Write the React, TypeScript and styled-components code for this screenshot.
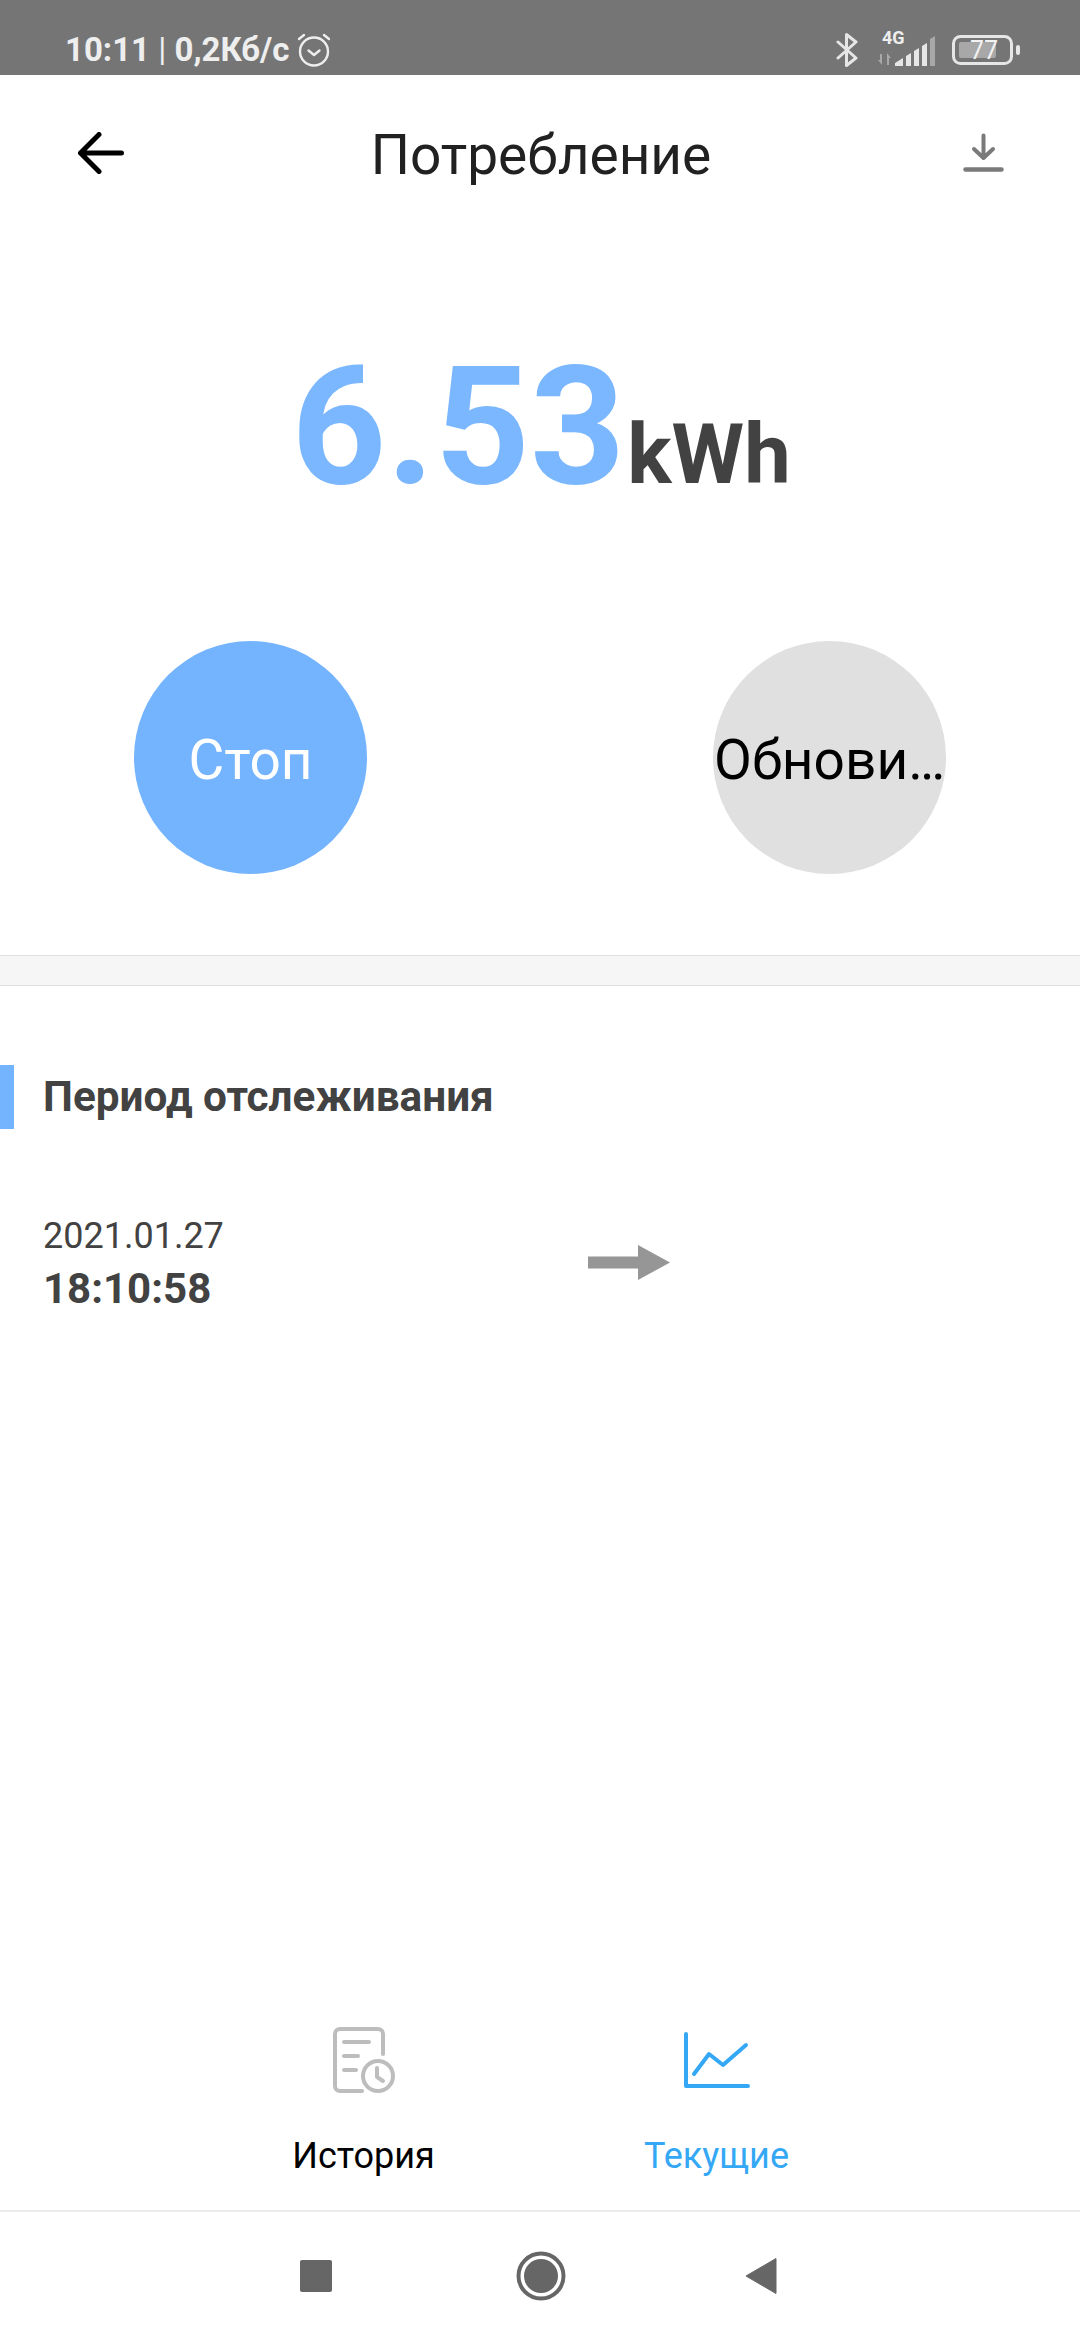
import styled, { createGlobalStyle } from 'styled-components'

const GlobalStyle = createGlobalStyle`
  html, body {
    margin: 0;
    padding: 0;
    background: #ffffff;
    font-family: Roboto, 'Noto Sans', sans-serif;
  }
`

const Page = styled.div`
  width: 1080px;
  height: 2340px;
  display: flex;
  flex-direction: column;
  overflow: hidden;
  background: #ffffff;
`

const StatusBar = styled.div`
  height: 75px;
  flex: none;
  box-sizing: border-box;
  padding: 24px 60px 0 65px;
  display: flex;
  align-items: center;
  justify-content: space-between;
  background: #757575;
  color: #eeeeee;
`

const StatusLeft = styled.div`
  display: flex;
  align-items: center;
  gap: 8px;
  font-size: 33px;
  font-weight: 700;
  line-height: 40px;
  white-space: nowrap;
`

const Thin = styled.span`
  font-weight: 400;
`

const StatusRight = styled.div`
  display: flex;
  align-items: center;
`

const SignalBox = styled.div`
  position: relative;
  width: 60px;
  height: 36px;
  margin-left: 20px;
`

const FourG = styled.span`
  position: absolute;
  left: 4px;
  top: -4px;
  font-size: 18px;
  line-height: 20px;
  font-weight: 700;
`

const BatteryBox = styled.div`
  position: relative;
  width: 68px;
  height: 30px;
  margin-left: 14px;
`

const BatteryText = styled.span`
  position: absolute;
  left: 18px;
  top: 0;
  font-size: 25px;
  line-height: 31px;
  color: #f2f2f2;
`

const Header = styled.div`
  height: 160px;
  flex: none;
  box-sizing: border-box;
  padding: 0 76px 0 78px;
  display: flex;
  align-items: center;
  justify-content: space-between;
`

const IconSlot = styled.div<{ $end?: boolean }>`
  width: 46px;
  height: 46px;
  margin-top: -4px;
  display: flex;
  align-items: center;
  justify-content: ${p => (p.$end ? 'flex-end' : 'flex-start')};
`

const Title = styled.div`
  font-size: 55px;
  line-height: 60px;
  color: #212121;
`

const ValueRow = styled.div`
  margin-top: 112px;
  padding-left: 2px;
  height: 160px;
  display: flex;
  align-items: baseline;
  justify-content: center;
  line-height: 160px;
`

const Value = styled.span`
  font-size: 166px;
  font-weight: 700;
  color: #7ab7ff;
`

const Unit = styled.span`
  font-size: 83px;
  font-weight: 700;
  color: #424242;
  margin-left: 2px;
`

const Buttons = styled.div`
  margin-top: 134px;
  padding: 0 134px;
  display: flex;
  justify-content: space-between;
`

const RoundButton = styled.div<{ $active?: boolean }>`
  width: 233px;
  height: 233px;
  box-sizing: border-box;
  padding-top: 4px;
  border-radius: 50%;
  display: flex;
  align-items: center;
  justify-content: center;
  background: ${p => (p.$active ? '#74b4ff' : '#e0e0e0')};
  color: ${p => (p.$active ? '#ffffff' : '#000000')};
  font-size: 55px;
  white-space: nowrap;
`

const Band = styled.div`
  margin-top: 81px;
  height: 31px;
  box-sizing: border-box;
  flex: none;
  background: #f6f6f6;
  border-top: 1px solid #e0e0e0;
  border-bottom: 1px solid #e0e0e0;
`

const SectionHead = styled.div`
  margin-top: 79px;
  display: flex;
  align-items: center;
  gap: 29px;
`

const Marker = styled.div`
  width: 14px;
  height: 64px;
  background: #74b4ff;
`

const SectionTitle = styled.div`
  margin-top: -2px;
  font-size: 42.3px;
  font-weight: 700;
  color: #424242;
`

const PeriodRow = styled.div`
  margin-top: 81px;
  padding-left: 43px;
  display: flex;
  align-items: center;
`

const PeriodPoint = styled.div`
  width: 545px;
  color: #424242;
`

const PointDate = styled.div`
  font-size: 36px;
  line-height: 53px;
`

const PointTime = styled.div`
  font-size: 42px;
  line-height: 52px;
  font-weight: 700;
`

const Spacer = styled.div`
  flex: 1;
`

const Tabs = styled.div`
  flex: none;
  display: flex;
  justify-content: center;
  padding-bottom: 30px;
`

const Tab = styled.div<{ $active?: boolean }>`
  width: 353px;
  display: flex;
  flex-direction: column;
  align-items: center;
  font-size: 36px;
  line-height: 48px;
  color: ${p => (p.$active ? '#35a8f5' : '#000000')};
`

const TabIcon = styled.div`
  height: 70px;
  margin-bottom: 37px;
  display: flex;
  align-items: center;
`

const NavBar = styled.div`
  height: 130px;
  flex: none;
  box-sizing: border-box;
  border-top: 2px solid #ebebeb;
  display: flex;
  align-items: center;
  justify-content: center;
  gap: 184px;
  padding-right: 3px;
`

const NavBackSlot = styled.div`
  display: flex;
  margin-left: -5px;
`

const BackIcon = () => (
  <svg width="46" height="42" viewBox="0 0 46 42" fill="none" stroke="#000" strokeWidth="5" strokeLinecap="round" strokeLinejoin="round">
    <path d="M2.500 21h41M21 2.500 2.500 21 21 39.500" />
  </svg>
)

const DownloadIcon = () => (
  <svg width="41" height="40" viewBox="0 0 41 40" fill="none" stroke="#7a7a7a" strokeLinecap="round" strokeLinejoin="round">
    <path strokeWidth="4" d="M20.500 2.500v22M11 16l9.500 9 9.500-9" />
    <path strokeWidth="4.500" d="M2.500 36.500h36" />
  </svg>
)

const AlarmIcon = () => (
  <svg width="34" height="34" viewBox="0 0 34 34" fill="none" stroke="#eeeeee" strokeWidth="2.400" strokeLinecap="round" strokeLinejoin="round">
    <circle cx="17" cy="18.500" r="14" />
    <path d="M11.500 17.500 17 22l5.500-4.500M2 6l5-4M32 6l-5-4" />
  </svg>
)

const BluetoothIcon = () => (
  <svg width="22" height="34" viewBox="0 0 22 34" fill="none" stroke="#e6e6e6" strokeWidth="3" strokeLinecap="round" strokeLinejoin="round">
    <path d="M2 9l18 16-9.500 7.500V1.500L20 9 2 25" />
  </svg>
)

const SignalIcon = () => (
  <svg width="60" height="36" viewBox="0 0 60 36" fill="#e6e6e6">
    <path fill="#a8a8a8" d="M4 22v11l-4-5h2v-6zM9 33V21l4 5h-2v7z" />
    <path d="M17 34v-3l8-5v8zM28 34V24l5-3v13zM36 34V19l5-3v18zM44 34V14l5-3v23z" />
    <path fill="#a8a8a8" d="M52 34V7l5-3v30z" />
  </svg>
)

const BatteryIcon = () => (
  <svg width="68" height="30" viewBox="0 0 68 30" fill="none">
    <rect x="1.500" y="1.500" width="58" height="27" rx="7" stroke="#e6e6e6" strokeWidth="3" />
    <rect x="7" y="7" width="37" height="16" rx="2" fill="#a8a8a8" />
    <rect x="64" y="10" width="4" height="10" rx="2" fill="#e6e6e6" />
  </svg>
)

const ArrowIcon = () => (
  <svg width="82" height="35" viewBox="0 0 82 35">
    <path fill="#969696" d="M0 11.500h50V0l32 17.500L50 35V23.500H0z" />
  </svg>
)

const HistoryIcon = () => (
  <svg width="62" height="66" viewBox="0 0 62 66" fill="none" stroke="#bdbdbd" strokeWidth="4" strokeLinecap="round" strokeLinejoin="round">
    <path d="M50 27V7a5 5 0 0 0-5-5H7a5 5 0 0 0-5 5v52a5 5 0 0 0 5 5h22" />
    <path d="M11 15h25M11 29h14M11 43h12" />
    <circle cx="45" cy="49" r="15" />
    <path d="M44 41v9l6 4" />
  </svg>
)

const ChartIcon = () => (
  <svg width="66" height="56" viewBox="0 0 66 56" fill="none" stroke="#35a8f5" strokeWidth="4" strokeLinecap="round" strokeLinejoin="round">
    <path d="M2 2v52h62" />
    <path d="M10 42l15-20 14 11 23-20" />
  </svg>
)

const RecentsIcon = () => (
  <svg width="32" height="32" viewBox="0 0 32 32">
    <rect width="32" height="32" rx="2" fill="#666666" />
  </svg>
)

const HomeIcon = () => (
  <svg width="50" height="50" viewBox="0 0 50 50">
    <circle cx="25" cy="25" r="22.500" fill="none" stroke="#666666" strokeWidth="4" />
    <circle cx="25" cy="25" r="17" fill="#666666" />
  </svg>
)

const NavBackIcon = () => (
  <svg width="32" height="38" viewBox="0 0 32 38">
    <path fill="#666666" d="M31 1.500v35L1 19z" stroke="#666666" strokeWidth="1" strokeLinejoin="round" />
  </svg>
)

export default function App() {
  return (
    <Page>
      <GlobalStyle />
      <StatusBar>
        <StatusLeft>
          <span>
            10:11 <Thin>|</Thin> 0,2Кб/с
          </span>
          <AlarmIcon />
        </StatusLeft>
        <StatusRight>
          <BluetoothIcon />
          <SignalBox>
            <SignalIcon />
            <FourG>4G</FourG>
          </SignalBox>
          <BatteryBox>
            <BatteryIcon />
            <BatteryText>77</BatteryText>
          </BatteryBox>
        </StatusRight>
      </StatusBar>

      <Header>
        <IconSlot>
          <BackIcon />
        </IconSlot>
        <Title>Потребление</Title>
        <IconSlot $end>
          <DownloadIcon />
        </IconSlot>
      </Header>

      <ValueRow>
        <Value>6.53</Value>
        <Unit>kWh</Unit>
      </ValueRow>

      <Buttons>
        <RoundButton $active>Стоп</RoundButton>
        <RoundButton>Обнови…</RoundButton>
      </Buttons>

      <Band />

      <SectionHead>
        <Marker />
        <SectionTitle>Период отслеживания</SectionTitle>
      </SectionHead>

      <PeriodRow>
        <PeriodPoint>
          <PointDate>2021.01.27</PointDate>
          <PointTime>18:10:58</PointTime>
        </PeriodPoint>
        <ArrowIcon />
      </PeriodRow>

      <Spacer />

      <Tabs>
        <Tab>
          <TabIcon>
            <HistoryIcon />
          </TabIcon>
          История
        </Tab>
        <Tab $active>
          <TabIcon>
            <ChartIcon />
          </TabIcon>
          Текущие
        </Tab>
      </Tabs>

      <NavBar>
        <RecentsIcon />
        <HomeIcon />
        <NavBackSlot>
          <NavBackIcon />
        </NavBackSlot>
      </NavBar>
    </Page>
  )
}
